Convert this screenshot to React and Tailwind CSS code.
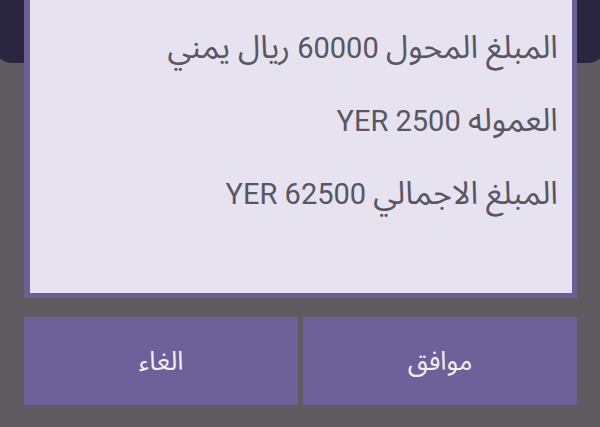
import React from "react";

// each line: [arabic, number/currency, arabic tail]
const lines = [
  ["المبلغ المحول", " 60000 ", "ريال يمني"],
  ["العموله", " 2500 YER", ""],
  ["المبلغ الاجمالي", " 62500 YER", ""],
];

const font = { fontFamily: 'Roboto, "Noto Sans Arabic", "DejaVu Sans", sans-serif' };

const App = () => {
  return (
    <div className="relative w-[600px] h-[427px] bg-[#5e5c61] overflow-hidden" style={font}>
      {/* screen behind the dialog */}
      <div className="absolute left-[-6px] right-[-6px] top-0 h-[63px] bg-[#2b2640] rounded-b-[18px]" />

      <div className="relative flex flex-col ml-[24px] mr-[23px]">
        <div className="bg-[#6c5f96] pl-[6px] pr-[5px] pb-[5px]">
          <div dir="rtl" className="h-[293px] bg-[#e6e2f0] pr-[14px] pt-[27px] flex flex-col gap-[32px]">
            {lines.map(([head, num, tail]) => (
              <p key={head} className="text-[29px] leading-[40px] text-[#58565f] text-right">
                <span className="text-[32px]">{head}</span>
                {num}
                {tail && <span className="text-[32px]">{tail}</span>}
              </p>
            ))}
          </div>
        </div>

        <div dir="rtl" className="flex gap-[5px] mt-[19px]">
          <button className="flex-1 h-[88px] bg-[#6e6098] text-[#f1eff6] text-[26px]">
            موافق
          </button>
          <button className="flex-1 h-[88px] bg-[#6e6098] text-[#f1eff6] text-[26px]">
            الغاء
          </button>
        </div>
      </div>
    </div>
  );
};

export default App;
